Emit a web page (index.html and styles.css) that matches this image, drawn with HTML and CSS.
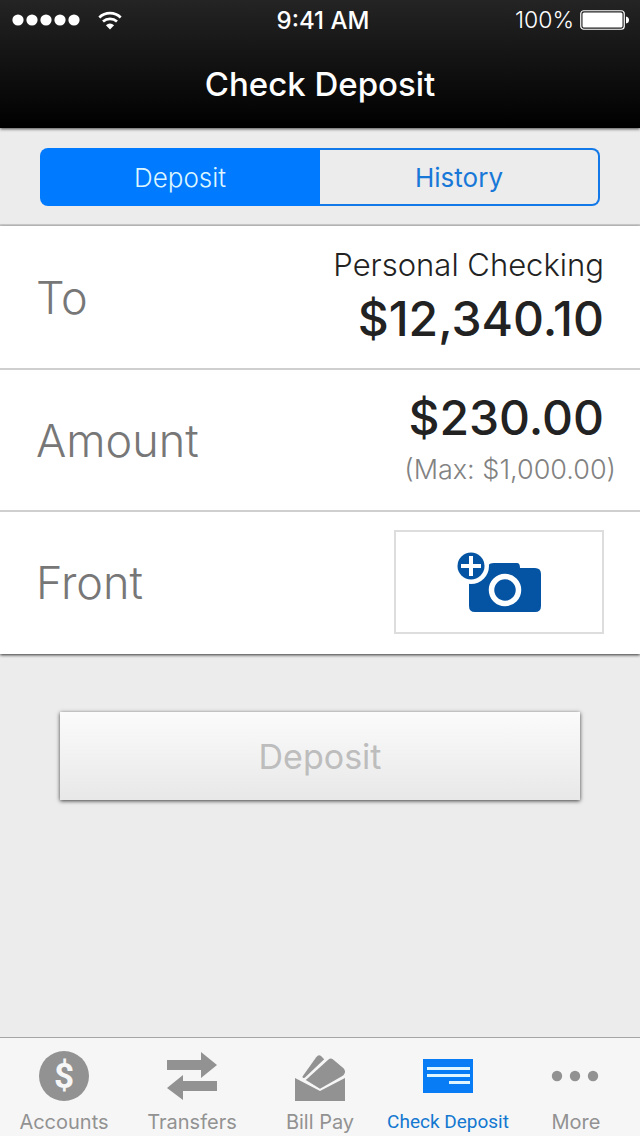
FILE: index.html
```html
<!DOCTYPE html>
<html lang="en">
<head>
<meta charset="utf-8">
<meta name="viewport" content="width=device-width, initial-scale=1">
<title>Check Deposit</title>
<link rel="stylesheet" href="styles.css">
</head>
<body>
<div class="app">
  <header class="header">
    <div class="status">
      <div class="status-left">
        <svg class="signal" width="68" height="12" viewBox="0 0 68 12" aria-hidden="true"><circle cx="6" cy="6" r="5.6"/><circle cx="20" cy="6" r="5.6"/><circle cx="34" cy="6" r="5.6"/><circle cx="48" cy="6" r="5.6"/><circle cx="62" cy="6" r="5.6"/></svg>
        <svg class="wifi" width="24" height="19" viewBox="0 0 24 19" aria-hidden="true"><g fill="none" stroke="#fff" stroke-width="2.7"><path d="M1.3 6.4C7.3.8 16.7.8 22.7 6.4"/><path d="M5 10.5C9 6.9 15 6.9 19 10.5"/></g><path fill="#fff" d="M12 18.4L7.9 14.3Q12 10.9 16.1 14.3Z"/></svg>
      </div>
      <span class="clock">9:41 AM</span>
      <div class="status-right">
        <span>100%</span>
        <svg width="50" height="20" viewBox="0 0 50 20" aria-hidden="true"><rect x=".75" y=".75" width="43.5" height="18.5" rx="3" fill="none" stroke="#fff" stroke-width="1.2"/><rect x="2.5" y="2.5" width="40" height="15" rx="1.5" fill="#fff"/><path fill="#fff" d="M46 6.5Q49 7 49 10T46 13.5Z"/></svg>
      </div>
    </div>
    <h1 class="title">Check Deposit</h1>
  </header>

  <nav class="segments" aria-label="Deposit views">
    <button class="segment segment-active" type="button" aria-pressed="true">Deposit</button>
    <button class="segment" type="button" aria-pressed="false">History</button>
  </nav>

  <main class="main">
    <section class="form">
      <div class="row">
        <span class="label">To</span>
        <div class="values">
          <span class="account">Personal Checking</span>
          <span class="money">$12,340.10</span>
        </div>
      </div>
      <div class="row">
        <span class="label">Amount</span>
        <div class="values">
          <span class="money">$230.00</span>
          <span class="limit">(Max: $1,000.00)</span>
        </div>
      </div>
      <div class="row">
        <span class="label">Front</span>
        <button class="photo" type="button" aria-label="Add front photo">
          <svg width="84" height="60" viewBox="0 0 84 60" aria-hidden="true">
            <path fill="#0554a4" d="M37 11H60Q63 11 63 16H78Q84 16 84 22V54Q84 60 78 60H18Q12 60 12 54V20L31 14Q32 11 37 11Z"/>
            <circle cx="14" cy="14" r="18" fill="#fff"/>
            <circle cx="14" cy="14" r="13.5" fill="#0554a4"/>
            <path d="M4 14H24M14 4V24" stroke="#fff" stroke-width="4"/>
            <circle cx="48" cy="38" r="13.5" fill="none" stroke="#fff" stroke-width="5.5"/>
          </svg>
        </button>
      </div>
    </section>
    <button class="submit" type="button" disabled>Deposit</button>
  </main>

  <nav class="tabs" aria-label="Main">
    <a class="tab" href="#accounts">
      <svg width="50" height="50" viewBox="0 0 50 50" aria-hidden="true"><circle cx="25" cy="25" r="25" fill="#929292"/><text class="coin" x="25" y="37" text-anchor="middle">$</text></svg>
      <span>Accounts</span>
    </a>
    <a class="tab" href="#transfers">
      <svg width="50" height="50" viewBox="0 0 50 50" aria-hidden="true"><path fill="#929292" d="M0 9H34V1L50 14L34 27V19H0ZM50 30H16V24L0 37L16 49V40H50Z"/></svg>
      <span>Transfers</span>
    </a>
    <a class="tab" href="#bills">
      <svg width="50" height="50" viewBox="0 0 50 50" aria-hidden="true"><g fill="#929292"><path d="M0 27L25 40L50 27V50H0Z"/><path d="M10.8 29L33.5 8.4Q35.600 6.600 37.800 8.200L48.500 17.300Q51.300 20.500 49 23.500Q48.500 24.400 46.500 25.500L25 37.700Z"/><path d="M7.5 25.5L21.200 6.200Q23.500 3.200 26 5L29.200 8.200L10 26.5Q7.500 28 7.500 25.5Z"/></g></svg>
      <span>Bill Pay</span>
    </a>
    <a class="tab tab-active" href="#deposit" aria-current="page">
      <svg width="50" height="50" viewBox="0 0 50 50" aria-hidden="true"><path fill="#087cf5" d="M0 8H50V42H0Z"/><path stroke="#dff5ff" stroke-width="3" d="M4 17.5H47M4 24.5H47M26 31.5H47"/></svg>
      <span>Check Deposit</span>
    </a>
    <a class="tab" href="#more">
      <svg width="50" height="50" viewBox="0 0 50 50" aria-hidden="true"><g fill="#929292"><circle cx="6" cy="25" r="5.2"/><circle cx="24" cy="25" r="5.2"/><circle cx="42" cy="25" r="5.2"/></g></svg>
      <span>More</span>
    </a>
  </nav>
</div>
</body>
</html>
```
FILE: styles.css
```css
* { box-sizing: border-box; }

body {
  margin: 0;
  background: #ececec;
  font-family: Inter, "Liberation Sans", sans-serif;
  color: #222;
}

button { font-family: inherit; cursor: pointer; }

.app {
  display: flex;
  flex-direction: column;
  min-height: 100vh;
}

.header {
  background: linear-gradient(#242424, #000);
  color: #fff;
  box-shadow: 0 1px 3px rgba(0, 0, 0, .7);
}

.status {
  display: grid;
  grid-template-columns: 1fr auto 1fr;
  align-items: center;
  height: 40px;
  padding: 0 10px 0 12px;
  font-size: 23px;
}

.status-left { display: flex; align-items: center; gap: 18px; }
.signal { fill: #fff; }

.clock { padding-left: 4px; font-size: 24px; font-weight: 500; }

.status-right {
  display: flex;
  align-items: center;
  justify-content: flex-end;
  gap: 6px;
  font-weight: 300;
}

.title {
  margin: 0;
  line-height: 88px;
  font-size: 33px;
  font-weight: 500;
  text-align: center;
}

.segments {
  display: flex;
  padding: 20px 40px 18px;
  border-bottom: 2px solid #cfcfcf;
}

.segment {
  width: 50%;
  height: 58px;
  padding: 0;
  border: 2px solid #1378e8;
  border-left: 0;
  border-radius: 0 8px 8px 0;
  background: transparent;
  color: #1878d8;
  font-size: 26px;
  font-weight: 400;
}

.segment-active {
  border: 0;
  border-radius: 8px 0 0 8px;
  background: #007aff;
  color: #dcf5ff;
  font-weight: 300;
}

.main { flex: 1; }

.form {
  padding-bottom: 2px;
  background: #fff;
  box-shadow: 0 1px 3px rgba(0, 0, 0, .8);
}

.row {
  display: flex;
  align-items: center;
  justify-content: space-between;
  min-height: 142px;
  padding: 0 36px;
}

.row + .row { border-top: 2px solid #cfcfcf; }

.label {
  color: #777;
  font-size: 45px;
  font-weight: 300;
}

.values {
  display: flex;
  flex-direction: column;
  align-items: flex-end;
  padding-bottom: 2px;
}

.account {
  font-size: 31px;
  font-weight: 300;
  line-height: 46px;
}

.money {
  font-size: 48px;
  font-weight: 500;
  line-height: 62px;
}

.limit {
  margin-right: -12px;
  color: #828282;
  font-size: 27px;
  font-weight: 300;
  line-height: 42px;
}

.photo {
  display: grid;
  place-items: center;
  width: 210px;
  height: 104px;
  padding: 0;
  border: 2px solid #ddd;
  background: #fff;
}

.submit {
  display: block;
  width: calc(100% - 120px);
  height: 88px;
  margin: 58px 60px;
  padding: 0;
  border: 0;
  background: linear-gradient(#fbfbfb, #e8e8e8);
  box-shadow: 0 1px 4px rgba(0, 0, 0, .75);
  color: #bdbdbd;
  font-size: 34px;
  font-weight: 400;
}

.tabs {
  display: grid;
  grid-template-columns: repeat(5, minmax(0, 1fr));
  height: 99px;
  border-top: 1px solid #a5a5a5;
  background: #f6f6f6;
}

.tab {
  display: flex;
  flex-direction: column;
  align-items: center;
  gap: 8px;
  padding-top: 13px;
  color: #929292;
  font-size: 20px;
  line-height: 26px;
  text-decoration: none;
  white-space: nowrap;
}

.tab-active {
  color: #1378d0;
  font-family: Roboto, sans-serif;
  font-size: 19px;
}

.coin {
  fill: #f6f6f6;
  font-family: Roboto, sans-serif;
  font-size: 35px;
  font-weight: 700;
}
```
